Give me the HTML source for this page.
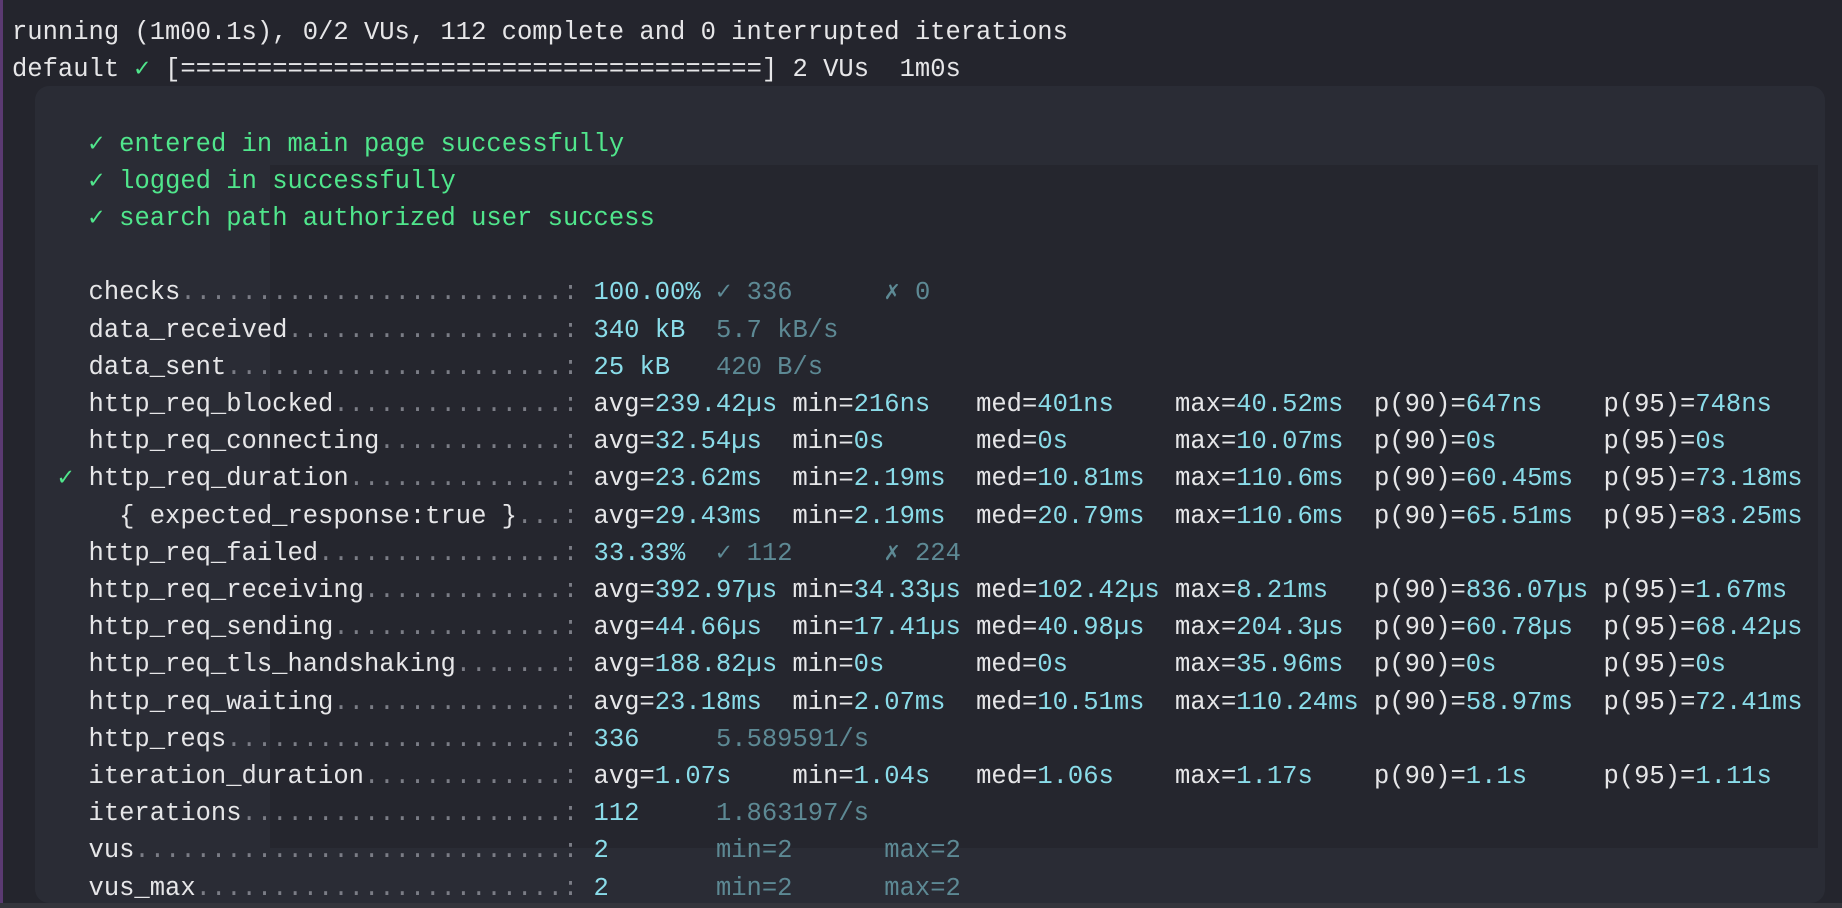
<!DOCTYPE html>
<html><head><meta charset="utf-8"><style>
html,body{margin:0;padding:0}
body{width:1842px;height:908px;overflow:hidden;background:#24252d;position:relative}
.bar{position:absolute;left:0;top:0;width:3px;height:908px;background:#5b3a72}
.win{position:absolute;left:35px;top:86px;width:1790px;height:817px;background:#2a2c35;border-radius:14px}
.inner{position:absolute;left:270px;top:165px;width:1548px;height:683px;background:#25262e}
.bottom{position:absolute;left:0;top:903px;width:1842px;height:5px;background:#34353c}
pre{position:absolute;left:12px;top:14px;margin:0;font-family:"Liberation Mono","DejaVu Sans Mono",monospace;font-size:25.5px;line-height:37.2px;color:#e6e6e8;white-space:pre}
.d{color:#7b7d86}.c{color:#8adce9}.g{color:#5d8994}.k{color:#50e68c}
</style></head><body>
<div class="bar"></div><div class="win"></div><div class="inner"></div><div class="bottom"></div>
<pre>running (1m00.1s), 0/2 VUs, 112 complete and 0 interrupted iterations
default <span class="k">✓</span> [======================================] 2 VUs  1m0s

     <span class="k">✓ entered in main page successfully</span>
     <span class="k">✓ logged in successfully</span>
     <span class="k">✓ search path authorized user success</span>

     checks<span class="d">.........................:</span> <span class="c">100.00%</span> <span class="g">✓ 336      ✗ 0</span>
     data_received<span class="d">..................:</span> <span class="c">340 kB</span>  <span class="g">5.7 kB/s</span>
     data_sent<span class="d">......................:</span> <span class="c">25 kB</span>   <span class="g">420 B/s</span>
     http_req_blocked<span class="d">...............:</span> avg=<span class="c">239.42µs</span> min=<span class="c">216ns</span>   med=<span class="c">401ns</span>    max=<span class="c">40.52ms</span>  p(90)=<span class="c">647ns</span>    p(95)=<span class="c">748ns</span>
     http_req_connecting<span class="d">............:</span> avg=<span class="c">32.54µs</span>  min=<span class="c">0s</span>      med=<span class="c">0s</span>       max=<span class="c">10.07ms</span>  p(90)=<span class="c">0s</span>       p(95)=<span class="c">0s</span>
   <span class="k">✓</span> http_req_duration<span class="d">..............:</span> avg=<span class="c">23.62ms</span>  min=<span class="c">2.19ms</span>  med=<span class="c">10.81ms</span>  max=<span class="c">110.6ms</span>  p(90)=<span class="c">60.45ms</span>  p(95)=<span class="c">73.18ms</span>
       { expected_response:true }<span class="d">...:</span> avg=<span class="c">29.43ms</span>  min=<span class="c">2.19ms</span>  med=<span class="c">20.79ms</span>  max=<span class="c">110.6ms</span>  p(90)=<span class="c">65.51ms</span>  p(95)=<span class="c">83.25ms</span>
     http_req_failed<span class="d">................:</span> <span class="c">33.33%</span>  <span class="g">✓ 112      ✗ 224</span>
     http_req_receiving<span class="d">.............:</span> avg=<span class="c">392.97µs</span> min=<span class="c">34.33µs</span> med=<span class="c">102.42µs</span> max=<span class="c">8.21ms</span>   p(90)=<span class="c">836.07µs</span> p(95)=<span class="c">1.67ms</span>
     http_req_sending<span class="d">...............:</span> avg=<span class="c">44.66µs</span>  min=<span class="c">17.41µs</span> med=<span class="c">40.98µs</span>  max=<span class="c">204.3µs</span>  p(90)=<span class="c">60.78µs</span>  p(95)=<span class="c">68.42µs</span>
     http_req_tls_handshaking<span class="d">.......:</span> avg=<span class="c">188.82µs</span> min=<span class="c">0s</span>      med=<span class="c">0s</span>       max=<span class="c">35.96ms</span>  p(90)=<span class="c">0s</span>       p(95)=<span class="c">0s</span>
     http_req_waiting<span class="d">...............:</span> avg=<span class="c">23.18ms</span>  min=<span class="c">2.07ms</span>  med=<span class="c">10.51ms</span>  max=<span class="c">110.24ms</span> p(90)=<span class="c">58.97ms</span>  p(95)=<span class="c">72.41ms</span>
     http_reqs<span class="d">......................:</span> <span class="c">336</span>     <span class="g">5.589591/s</span>
     iteration_duration<span class="d">.............:</span> avg=<span class="c">1.07s</span>    min=<span class="c">1.04s</span>   med=<span class="c">1.06s</span>    max=<span class="c">1.17s</span>    p(90)=<span class="c">1.1s</span>     p(95)=<span class="c">1.11s</span>
     iterations<span class="d">.....................:</span> <span class="c">112</span>     <span class="g">1.863197/s</span>
     vus<span class="d">............................:</span> <span class="c">2</span>       <span class="g">min=2      max=2</span>
     vus_max<span class="d">........................:</span> <span class="c">2</span>       <span class="g">min=2      max=2</span></pre>
</body></html>
